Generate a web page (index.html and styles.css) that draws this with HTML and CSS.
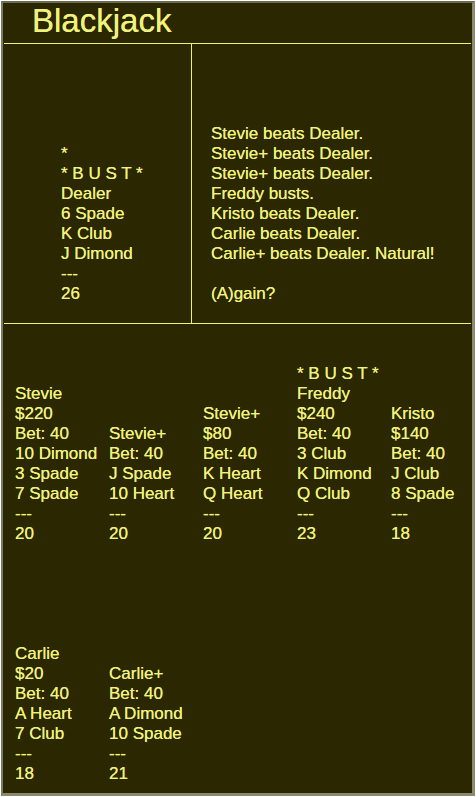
FILE: index.html
```html
<!DOCTYPE html>
<html>
<head>
<meta charset="utf-8">
<title>Blackjack</title>
<link rel="stylesheet" href="styles.css">
</head>
<body>
<div class="frame">
  <div class="header"><h1 class="title">Blackjack</h1></div>
  <div class="top">
    <div class="dealer">
      <div class="lines">
        <div>*</div>
        <div>* B U S T *</div>
        <div>Dealer</div>
        <div>6 Spade</div>
        <div>K Club</div>
        <div>J Dimond</div>
        <div>---</div>
        <div>26</div>
      </div>
    </div>
    <div class="messages">
      <div class="lines">
        <div>Stevie beats Dealer.</div>
        <div>Stevie+ beats Dealer.</div>
        <div>Stevie+ beats Dealer.</div>
        <div>Freddy busts.</div>
        <div>Kristo beats Dealer.</div>
        <div>Carlie beats Dealer.</div>
        <div>Carlie+ beats Dealer. Natural!</div>
        <div>&nbsp;</div>
        <div>(A)gain?</div>
      </div>
    </div>
  </div>
  <div class="players">
    <div class="player">
      <div>Stevie</div><div>$220</div><div>Bet: 40</div><div>10 Dimond</div><div>3 Spade</div><div>7 Spade</div><div>---</div><div>20</div>
    </div>
    <div class="player">
      <div>Stevie+</div><div>Bet: 40</div><div>J Spade</div><div>10 Heart</div><div>---</div><div>20</div>
    </div>
    <div class="player">
      <div>Stevie+</div><div>$80</div><div>Bet: 40</div><div>K Heart</div><div>Q Heart</div><div>---</div><div>20</div>
    </div>
    <div class="player">
      <div>* B U S T *</div><div>Freddy</div><div>$240</div><div>Bet: 40</div><div>3 Club</div><div>K Dimond</div><div>Q Club</div><div>---</div><div>23</div>
    </div>
    <div class="player">
      <div>Kristo</div><div>$140</div><div>Bet: 40</div><div>J Club</div><div>8 Spade</div><div>---</div><div>18</div>
    </div>
    <div class="player">
      <div>Carlie</div><div>$20</div><div>Bet: 40</div><div>A Heart</div><div>7 Club</div><div>---</div><div>18</div>
    </div>
    <div class="player">
      <div>Carlie+</div><div>Bet: 40</div><div>A Dimond</div><div>10 Spade</div><div>---</div><div>21</div>
    </div>
  </div>
</div>
</body>
</html>
```
FILE: styles.css
```css
html, body {
  margin: 0;
  padding: 0;
  background: #ffffff;
}
body {
  font-family: "Liberation Sans", Arial, Helvetica, sans-serif;
  font-size: 17px;
  line-height: 20px;
  color: #f0f27a;
}
.frame {
  margin: 1px;
  height: 795px;
  box-sizing: border-box;
  background: #2b2700;
  border-top: 2px solid #6e6c50;
  border-left: 2px solid #7c7a60;
  border-right: 3px solid #8c8a70;
  border-bottom: 3px solid #8c8a70;
  padding: 0 1px 0 1px;
  display: flex;
  flex-direction: column;
  text-shadow: 0 0 0.3px #f0f27a;
}
.header {
  height: 40px;
  border-bottom: 1px solid #eef070;
  padding-left: 28px;
}
.title {
  margin: 0;
  font-size: 33px;
  line-height: 35px;
  font-weight: normal;
}
.top {
  display: flex;
  height: 279px;
  border-bottom: 1px solid #eef070;
}
.dealer {
  width: 188px;
  border-right: 1px solid #eef070;
  display: flex;
  align-items: flex-end;
  padding: 0 0 19px 57px;
  box-sizing: border-box;
}
.messages {
  flex: 1;
  display: flex;
  align-items: flex-end;
  padding: 0 0 19px 19px;
}
.lines {
  white-space: nowrap;
}
.players {
  flex: 1;
  display: grid;
  grid-template-columns: repeat(5, 94px);
  grid-template-rows: 220px 240px;
  padding-left: 11px;
}
.player {
  display: flex;
  flex-direction: column;
  justify-content: flex-end;
  white-space: nowrap;
}
```
